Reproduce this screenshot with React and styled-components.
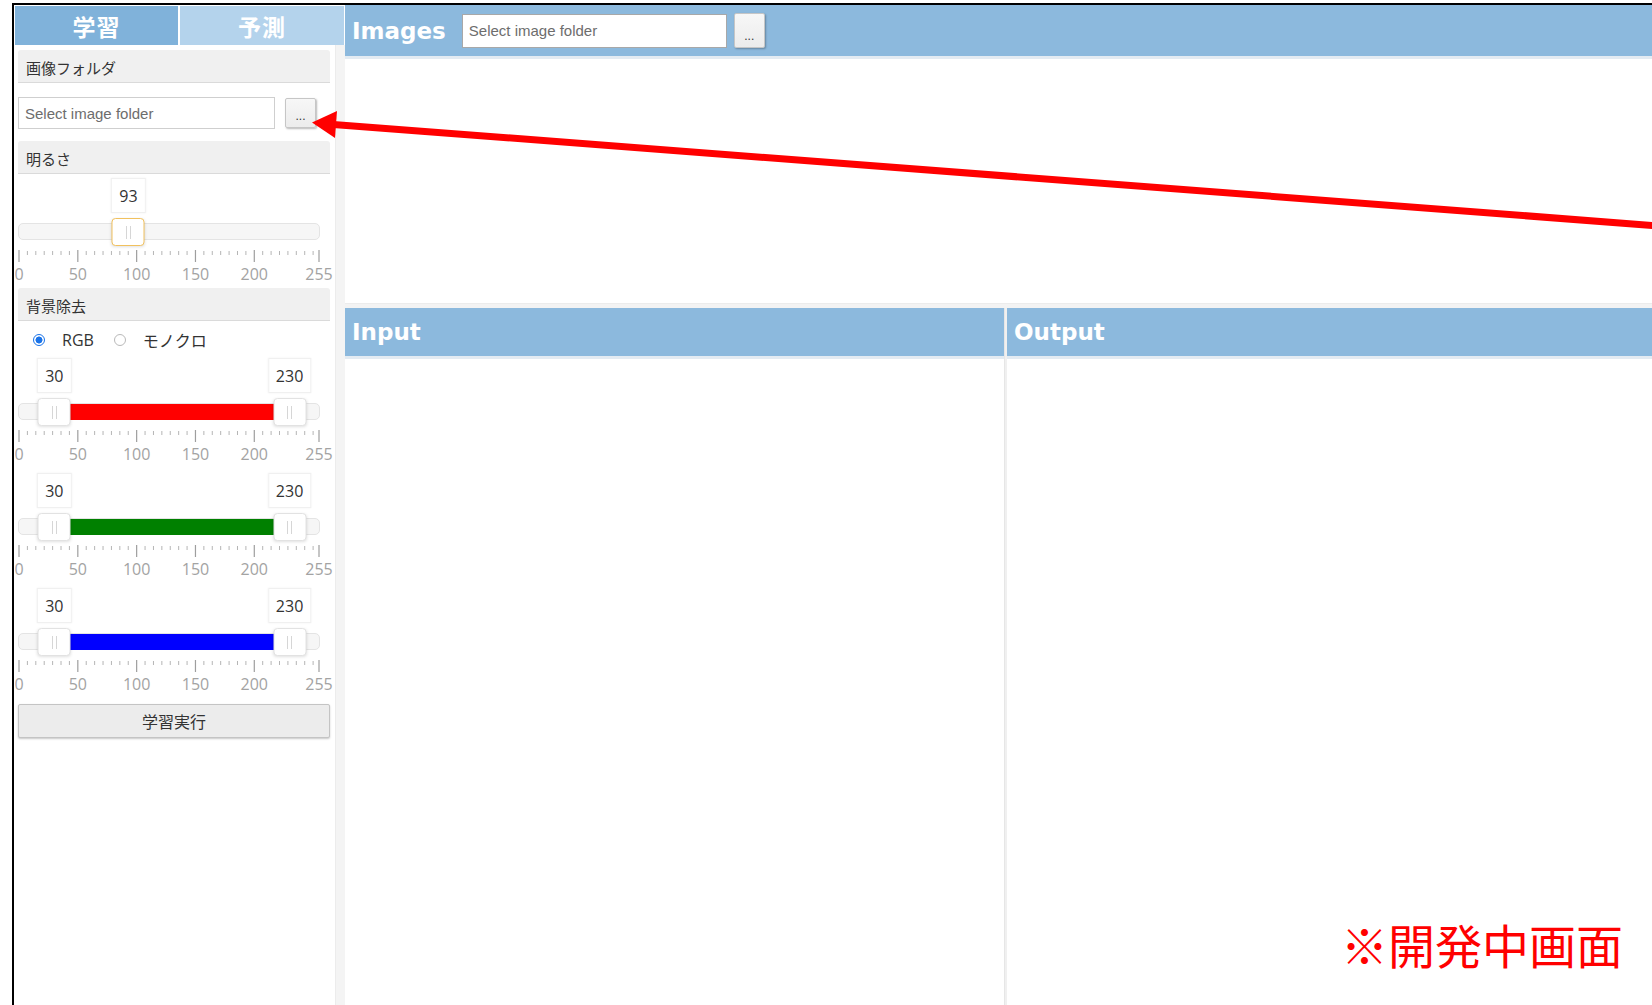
import React from "react";
import styled, { createGlobalStyle, css } from "styled-components";

const GlobalStyle = createGlobalStyle`
  html, body {
    margin: 0;
    padding: 0;
    background: #ffffff;
    overflow: hidden;
  }
  body {
    font-family: "Open Sans", "Noto Sans CJK JP", sans-serif;
    color: #333;
  }
  * { box-sizing: border-box; }
`;

const HEADER_BLUE = "#8cb9dd";
const SCALE_W = 300;
const pos = (v) => 1 + (v / 255) * SCALE_W;

/* ---------- page frame ---------- */

const Stage = styled.div`
  position: relative;
  width: 1652px;
  height: 1005px;
  padding: 3px 0 0 12px;
  overflow: hidden;
  background: #fff;
`;

const Frame = styled.div`
  display: flex;
  height: 100%;
  border-top: 2px solid #000;
  border-left: 2px solid #000;
`;

/* ---------- sidebar ---------- */

const Sidebar = styled.aside`
  width: 331px;
  flex: none;
  display: flex;
  flex-direction: column;
  padding-left: 1px;
`;

const TabBar = styled.div`
  display: flex;
  gap: 2px;
  height: 40px;
  padding-top: 1px;
`;

const Tab = styled.div`
  width: ${(p) => p.$w}px;
  display: flex;
  align-items: center;
  justify-content: center;
  background: ${(p) => (p.$active ? "#80b2da" : "#b4d3ec")};
  color: #fff;
  font-family: "Noto Sans CJK JP", sans-serif;
  font-weight: 700;
  font-size: 23px;
  letter-spacing: 1px;
`;

const SidebarBody = styled.div`
  flex: 1;
  display: flex;
  min-height: 0;
`;

const Panel = styled.div`
  width: 320px;
  flex: none;
  display: flex;
  flex-direction: column;
  padding: 0 5px 0 3px;
  overflow: hidden;
`;

const ScrollTrack = styled.div`
  flex: 1;
  background: #f4f4f4;
  border-left: 1px solid #ececec;
`;

const SectionHeader = styled.div`
  height: 33px;
  margin-top: ${(p) => p.$mt}px;
  display: flex;
  align-items: center;
  padding: 2px 0 0 8px;
  background: #f0f0f0;
  border-bottom: 1px solid #dadada;
  border-radius: 3px 3px 0 0;
  font-family: "Noto Sans CJK JP", sans-serif;
  font-size: 15px;
  color: #333;
`;

const FolderRow = styled.div`
  display: flex;
  align-items: center;
  gap: ${(p) => p.$gap}px;
  margin-top: ${(p) => p.$mt || 0}px;
`;

const PathInput = styled.input`
  width: ${(p) => p.$w}px;
  height: ${(p) => p.$h}px;
  padding: 0 6px;
  border: 1px solid ${(p) => p.$border || "#cfcfcf"};
  background: #fff;
  font-family: "Liberation Sans", Arial, sans-serif;
  font-size: 15px;
  color: #333;
  outline: none;
  &::placeholder { color: #6d6d6d; }
`;

const BrowseButton = styled.button`
  width: 31px;
  height: ${(p) => p.$h}px;
  padding: 0 0 4px;
  border: 1px solid #c6c6c6;
  border-radius: 2px;
  background: linear-gradient(#f7f7f7, #ececec);
  box-shadow: 1px 1px 2px rgba(0, 0, 0, 0.28);
  font-family: "Liberation Sans", Arial, sans-serif;
  font-size: 12px;
  color: #333;
  display: flex;
  align-items: flex-end;
  justify-content: center;
`;

/* ---------- sliders ---------- */

const SliderBlock = styled.div`
  width: 302px;
  margin-top: ${(p) => p.$mt}px;
  display: flex;
  flex-direction: column;
`;

const ValueRow = styled.div`
  position: relative;
  height: 35px;
`;

const ValueTip = styled.div`
  position: absolute;
  top: 0;
  height: 35px;
  padding: 0 7px;
  transform: translateX(-50%);
  display: flex;
  align-items: center;
  background: #fff;
  border: 1px solid #f0f0f0;
  box-shadow: 0 0 2px rgba(0, 0, 0, 0.06);
  font-size: 16px;
  color: #333;
`;

const TrackArea = styled.div`
  position: relative;
  height: 28px;
  margin-top: 5px;
`;

const Rail = styled.div`
  position: absolute;
  left: 0;
  right: 0;
  top: 5px;
  height: 17px;
  background: #f6f6f6;
  border: 1px solid #e4e4e4;
  border-radius: 5px;
`;

const Fill = styled.div`
  position: absolute;
  top: 6px;
  height: 16px;
  background: ${(p) => p.$color};
`;

const Thumb = styled.div`
  position: absolute;
  top: 0;
  width: 33px;
  height: 28px;
  transform: translateX(-50%);
  background: #fff;
  border: 1px solid ${(p) => (p.$focused ? "#f1c15e" : "#e2e2e2")};
  border-radius: 4px;
  box-shadow: 0 1px 3px rgba(0, 0, 0, 0.12);
  &::after {
    content: "";
    position: absolute;
    left: 50%;
    top: 7px;
    width: 3px;
    height: 13px;
    transform: translateX(-50%);
    border-left: 1px solid #d6d6d6;
    border-right: 1px solid #d6d6d6;
  }
`;

const TickSvg = styled.svg`
  display: block;
  margin-top: 4px;
  overflow: visible;
`;

const LabelRow = styled.div`
  position: relative;
  height: 20px;
  margin-top: 2px;
`;

const TickLabel = styled.span`
  position: absolute;
  top: 0;
  transform: translateX(-50%);
  font-family: "Open Sans", sans-serif;
  font-size: 16px;
  line-height: 20px;
  color: #a3a3a3;
`;

const MAJORS = [0, 50, 100, 150, 200, 255];
const MINORS = Array.from({ length: 36 }, (_, k) => (k * 50) / 7).filter(
  (v) => !MAJORS.includes(Math.round(v * 1000) / 1000)
);

function Ticks() {
  return (
    <>
      <TickSvg width="302" height="12">
        {MINORS.map((v) => (
          <line key={v} x1={pos(v)} x2={pos(v)} y1="1" y2="5" stroke="#b5b5b5" strokeWidth="1" />
        ))}
        {MAJORS.map((v) => (
          <line key={v} x1={pos(v)} x2={pos(v)} y1="0" y2="12" stroke="#9e9e9e" strokeWidth="1.2" />
        ))}
      </TickSvg>
      <LabelRow>
        {MAJORS.map((v) => (
          <TickLabel key={v} style={{ left: pos(v) }}>
            {v}
          </TickLabel>
        ))}
      </LabelRow>
    </>
  );
}

function SingleSlider({ value, mt }) {
  return (
    <SliderBlock $mt={mt}>
      <ValueRow>
        <ValueTip style={{ left: pos(value) }}>{value}</ValueTip>
      </ValueRow>
      <TrackArea>
        <Rail />
        <Thumb $focused style={{ left: pos(value) }} />
      </TrackArea>
      <Ticks />
    </SliderBlock>
  );
}

function RangeSlider({ lo, hi, color, mt }) {
  return (
    <SliderBlock $mt={mt}>
      <ValueRow>
        <ValueTip style={{ left: pos(lo) }}>{lo}</ValueTip>
        <ValueTip style={{ left: pos(hi) }}>{hi}</ValueTip>
      </ValueRow>
      <TrackArea>
        <Rail />
        <Fill $color={color} style={{ left: pos(lo), width: pos(hi) - pos(lo) }} />
        <Thumb style={{ left: pos(lo) }} />
        <Thumb style={{ left: pos(hi) }} />
      </TrackArea>
      <Ticks />
    </SliderBlock>
  );
}

/* ---------- radio ---------- */

const RadioRow = styled.div`
  display: flex;
  align-items: center;
  height: 24px;
  margin-top: 7px;
  padding-left: 15px;
  gap: 20px;
`;

const RadioLabel = styled.label`
  display: flex;
  align-items: center;
  gap: 17px;
  font-family: "Open Sans", "Noto Sans CJK JP", sans-serif;
  font-size: 16px;
  color: #333;
`;

const Radio = styled.input.attrs({ type: "radio" })`
  appearance: none;
  margin: 0;
  width: 12px;
  height: 12px;
  border-radius: 50%;
  border: 1px solid #b9b9b9;
  background: #fff;
  ${(p) =>
    p.checked &&
    css`
      border-color: #1a73e8;
      background: radial-gradient(circle, #1a73e8 0 3.2px, #fff 3.8px);
    `}
`;

const RunButton = styled.button`
  width: 312px;
  height: 34px;
  margin-top: 10px;
  border: 1px solid #c4c4c4;
  border-radius: 2px;
  background: #ececec;
  box-shadow: 0 1px 2px rgba(0, 0, 0, 0.22);
  font-family: "Noto Sans CJK JP", sans-serif;
  font-size: 16px;
  color: #333;
`;

/* ---------- main area ---------- */

const Main = styled.main`
  flex: 1;
  display: flex;
  flex-direction: column;
  min-width: 0;
`;

const ImagesPane = styled.section`
  height: 298px;
  flex: none;
  display: flex;
  flex-direction: column;
`;

const PaneHeader = styled.header`
  height: ${(p) => p.$h}px;
  flex: none;
  display: flex;
  align-items: center;
  gap: ${(p) => p.$gap || 0}px;
  padding-left: 7px;
  background: ${HEADER_BLUE};
  border-bottom: 3px solid #e3ebf2;
`;

const PaneTitle = styled.h2`
  margin: 0;
  font-family: "DejaVu Sans", sans-serif;
  font-weight: 700;
  font-size: 23px;
  color: #fff;
  margin-right: ${(p) => p.$mr || 0}px;
`;

const PaneBody = styled.div`
  flex: 1;
  background: #fff;
`;

const HSplitter = styled.div`
  height: 5px;
  flex: none;
  background: #f3f3f3;
  border-top: 1px solid #ececec;
`;

const LowerRow = styled.div`
  flex: 1;
  display: flex;
`;

const ViewPane = styled.section`
  width: ${(p) => (p.$w ? `${p.$w}px` : "auto")};
  flex: ${(p) => (p.$w ? "none" : "1")};
  display: flex;
  flex-direction: column;
`;

const VSplitter = styled.div`
  width: 3px;
  flex: none;
  background: #f0f0f0;
  border-left: 1px solid #e6e6e6;
`;

/* ---------- overlay annotations ---------- */

const ArrowLayer = styled.svg`
  position: absolute;
  left: 0;
  top: 0;
  pointer-events: none;
`;

const Note = styled.div`
  position: absolute;
  left: 1341px;
  top: 920px;
  font-family: "Noto Sans CJK JP", sans-serif;
  font-size: 47px;
  line-height: 1;
  color: #ff0000;
  white-space: nowrap;
`;

export default function App() {
  return (
    <>
      <GlobalStyle />
      <Stage>
        <Frame>
          <Sidebar>
            <TabBar>
              <Tab $w={163} $active>学習</Tab>
              <Tab $w={164}>予測</Tab>
            </TabBar>
            <SidebarBody>
              <Panel>
                <SectionHeader $mt={5}>画像フォルダ</SectionHeader>
                <FolderRow $gap={10} $mt={14}>
                  <PathInput $w={257} $h={32} placeholder="Select image folder" readOnly />
                  <BrowseButton $h={30}>...</BrowseButton>
                </FolderRow>

                <SectionHeader $mt={12}>明るさ</SectionHeader>
                <SingleSlider value={93} mt={4} />

                <SectionHeader $mt={4}>背景除去</SectionHeader>
                <RadioRow>
                  <RadioLabel>
                    <Radio name="mode" checked readOnly />
                    RGB
                  </RadioLabel>
                  <RadioLabel>
                    <Radio name="mode" checked={false} readOnly />
                    モノクロ
                  </RadioLabel>
                </RadioRow>
                <RangeSlider lo={30} hi={230} color="#ff0000" mt={6} />
                <RangeSlider lo={30} hi={230} color="#008000" mt={9} />
                <RangeSlider lo={30} hi={230} color="#0000ff" mt={9} />

                <RunButton>学習実行</RunButton>
              </Panel>
              <ScrollTrack />
            </SidebarBody>
          </Sidebar>

          <Main>
            <ImagesPane>
              <PaneHeader $h={54}>
                <PaneTitle $mr={16}>Images</PaneTitle>
                <FolderRow $gap={7}>
                  <PathInput $w={265} $h={34} $border="#a8a8a8" placeholder="Select image folder" readOnly />
                  <BrowseButton $h={35}>...</BrowseButton>
                </FolderRow>
              </PaneHeader>
              <PaneBody />
            </ImagesPane>
            <HSplitter />
            <LowerRow>
              <ViewPane $w={659}>
                <PaneHeader $h={51}>
                  <PaneTitle>Input</PaneTitle>
                </PaneHeader>
                <PaneBody />
              </ViewPane>
              <VSplitter />
              <ViewPane>
                <PaneHeader $h={51}>
                  <PaneTitle>Output</PaneTitle>
                </PaneHeader>
                <PaneBody />
              </ViewPane>
            </LowerRow>
          </Main>
        </Frame>

        <ArrowLayer width="1652" height="1005" viewBox="0 0 1652 1005">
          <line x1="330" y1="124.2" x2="1670" y2="226.8" stroke="#ff0000" strokeWidth="7" />
          <polygon points="312,122.5 337,111 335,138" fill="#ff0000" />
        </ArrowLayer>
        <Note>※開発中画面</Note>
      </Stage>
    </>
  );
}
